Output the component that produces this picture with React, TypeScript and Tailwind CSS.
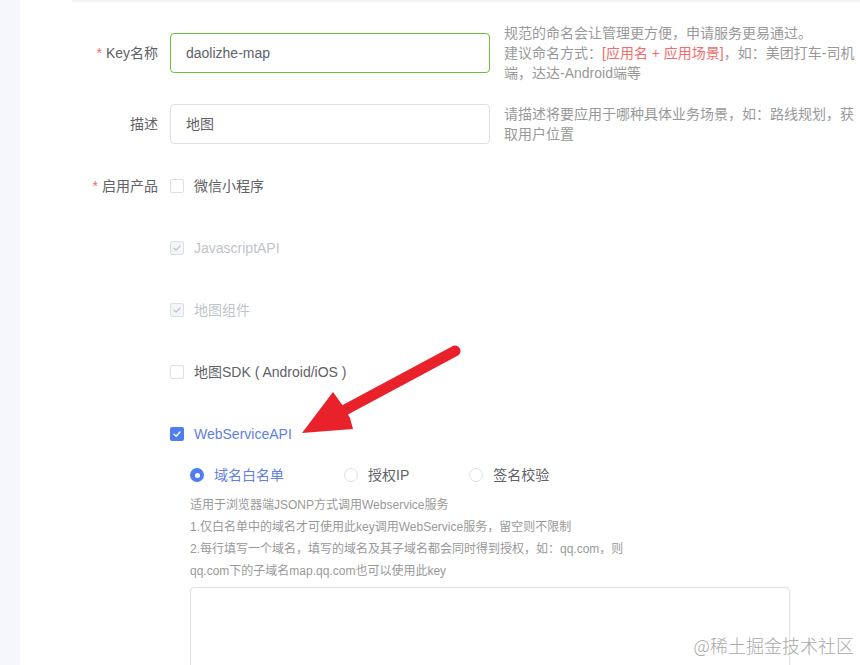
import React from "react";

const font = { fontFamily: '"Liberation Sans", "Noto Sans CJK SC", sans-serif' };

const Check = ({ state }: { state: "off" | "disabled" | "on" }) => {
  if (state === "on")
    return (
      <span className="flex h-[14px] w-[14px] items-center justify-center rounded-[2px] bg-[#4f7ef3]">
        <svg width="10" height="10" viewBox="0 0 10 10" fill="none">
          <path d="M2 5.2 L4.2 7.2 L8 3" stroke="white" strokeWidth="1.4" strokeLinecap="round" strokeLinejoin="round" />
        </svg>
      </span>
    );
  if (state === "disabled")
    return (
      <span className="flex h-[14px] w-[14px] items-center justify-center rounded-[2px] border border-[#dcdfe6] bg-[#f2f6fc]">
        <svg width="10" height="10" viewBox="0 0 10 10" fill="none">
          <path d="M2 5.2 L4.2 7.2 L8 3" stroke="#c0c4cc" strokeWidth="1.2" strokeLinecap="round" strokeLinejoin="round" />
        </svg>
      </span>
    );
  return <span className="h-[14px] w-[14px] rounded-[2px] border border-[#dcdfe6] bg-white" />;
};

const Radio = ({ on, label }: { on?: boolean; label: string }) => (
  <div className="flex items-center gap-[10px]">
    {on ? (
      <span className="flex h-[14px] w-[14px] items-center justify-center rounded-full bg-[#4f7ef3]">
        <span className="h-[5px] w-[5px] rounded-full bg-white" />
      </span>
    ) : (
      <span className="h-[14px] w-[14px] rounded-full border border-[#dcdfe6] bg-white" />
    )}
    <span className={on ? "text-[#5f80e6]" : "text-[#606266]"}>{label}</span>
  </div>
);

const Label = ({ text, required }: { text: string; required?: boolean }) => (
  <div className="w-[150px] shrink-0 pr-[12px] text-right text-[14px] text-[#606266]">
    {required && <span className="mr-[4px] text-[#f56c6c]">*</span>}
    {text}
  </div>
);

const products: { label: string; state: "off" | "disabled" | "on" }[] = [
  { label: "微信小程序", state: "off" },
  { label: "JavascriptAPI", state: "disabled" },
  { label: "地图组件", state: "disabled" },
  { label: "地图SDK ( Android/iOS )", state: "off" },
  { label: "WebServiceAPI", state: "on" },
];

export default function App() {
  return (
    <div className="flex h-[665px] w-full overflow-hidden bg-white" style={font}>
      <div className="w-[20px] shrink-0 bg-[#f5f7fa]" />
      <div className="relative flex-1">
        <div className="ml-[52px] h-[2px] bg-[#f2f3f5]" />

        <div className="mt-[21px] flex items-center">
          <Label text="Key名称" required />
          <div className="flex h-[40px] w-[320px] shrink-0 items-center rounded-[4px] border border-[#67c23a] px-[15px] text-[14px] text-[#606266]">
            daolizhe-map
          </div>
          <div className="ml-[14px] w-[352px] shrink-0 text-[14px] leading-[20px] text-[#999]">
            <div>规范的命名会让管理更方便，申请服务更易通过。</div>
            <div>
              建议命名方式：<span className="text-[#f56c6c]">[应用名 + 应用场景]</span>，如：美团打车-司机端，达达-Android端等
            </div>
          </div>
        </div>

        <div className="mt-[21px] flex items-center">
          <Label text="描述" />
          <div className="flex h-[40px] w-[320px] shrink-0 items-center rounded-[4px] border border-[#dcdfe6] px-[15px] text-[14px] text-[#606266]">
            地图
          </div>
          <div className="ml-[14px] w-[352px] shrink-0 text-[14px] leading-[20px] text-[#999]">
            请描述将要应用于哪种具体业务场景，如：路线规划，获取用户位置
          </div>
        </div>

        <div className="mt-[22px] flex items-start">
          <div className="flex h-[40px] items-center">
            <Label text="启用产品" required />
          </div>
          <div className="flex flex-col">
            <div className="flex flex-col gap-[22px]">
              {products.map((p) => (
                <div key={p.label} className="flex h-[40px] items-center gap-[10px] text-[14px]">
                  <Check state={p.state} />
                  <span
                    className={
                      p.state === "on" ? "text-[#5f80e6]" : p.state === "disabled" ? "text-[#c0c4cc]" : "text-[#606266]"
                    }
                  >
                    {p.label}
                  </span>
                </div>
              ))}
            </div>

            <div className="ml-[20px] mt-[11px] flex h-[20px] items-center gap-[60px] text-[14px]">
              <Radio on label="域名白名单" />
              <Radio label="授权IP" />
              <Radio label="签名校验" />
            </div>

            <div className="ml-[20px] mt-[9px] text-[12px] leading-[22px] text-[#999]">
              <div>适用于浏览器端JSONP方式调用Webservice服务</div>
              <div>1.仅白名单中的域名才可使用此key调用WebService服务，留空则不限制</div>
              <div>2.每行填写一个域名，填写的域名及其子域名都会同时得到授权，如：qq.com，则</div>
              <div>qq.com下的子域名map.qq.com也可以使用此key</div>
            </div>

            <div className="ml-[20px] mt-[5px] h-[120px] w-[600px] rounded-[4px] border border-[#dcdfe6] bg-white" />
          </div>
        </div>

        <svg className="pointer-events-none absolute left-[-20px] top-0" width="860" height="665" viewBox="0 0 860 665">
          <line x1="455" y1="351" x2="343" y2="411" stroke="#e8212a" strokeWidth="11" strokeLinecap="round" />
          <polygon points="302,433 333,392 343,406 350,418 353,429" fill="#e8212a" />
        </svg>

        <div
          className="pointer-events-none absolute bottom-[6px] right-[6px] text-[18px] font-light text-[#a8a8a8]"
          style={{ fontFamily: '"Noto Sans CJK SC", sans-serif' }}
        >
          @稀土掘金技术社区
        </div>
      </div>
    </div>
  );
}
